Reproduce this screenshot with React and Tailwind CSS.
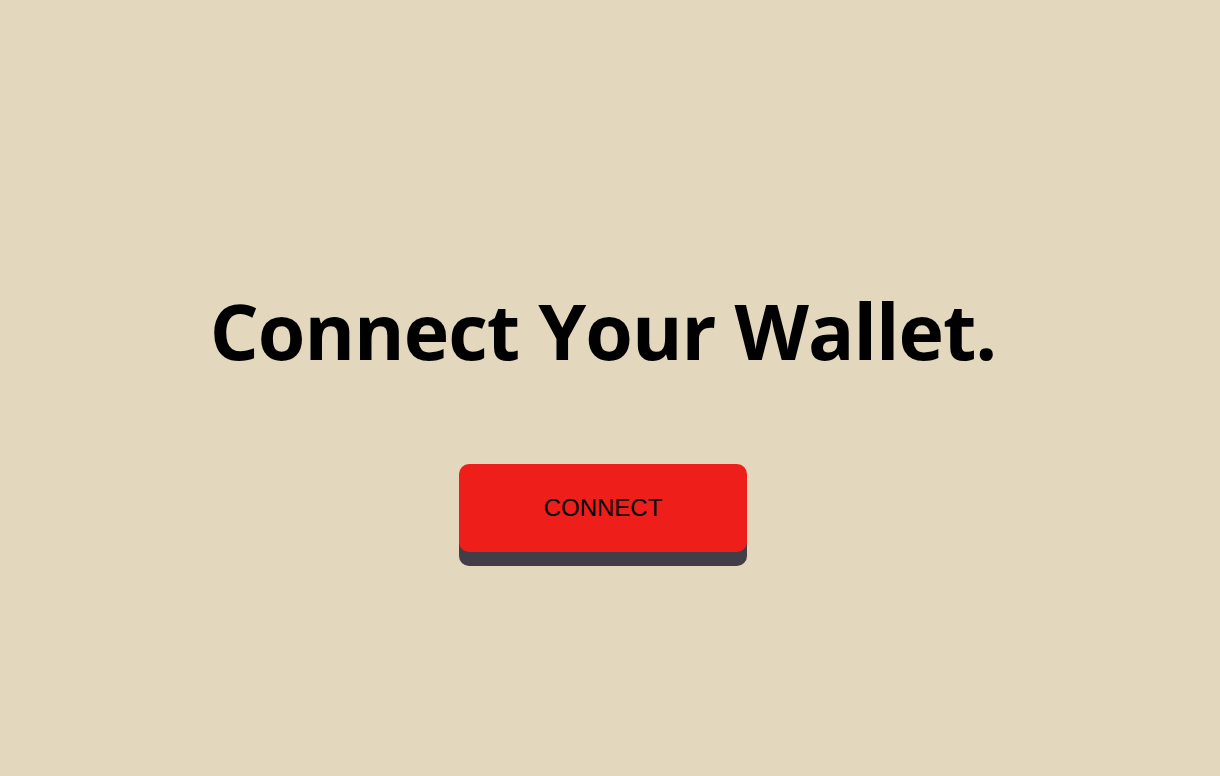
export default function App() {
  return (
    <div className="min-h-screen w-full bg-[#e3d8bd] flex flex-col items-center pt-[276px] pr-[14px]">
      <h1 className="font-['Open_Sans','Noto_Sans',sans-serif] text-[77px] leading-[109px] font-bold tracking-[-1px] text-black">
        Connect Your Wallet.
      </h1>
      <button className="mt-[79px] w-[288px] h-[88px] rounded-[10px] bg-[#ee1f1a] shadow-[0_14px_0_#433d48] font-['Liberation_Sans',Arial,sans-serif] text-black text-[24px]">
        CONNECT
      </button>
    </div>
  );
}
